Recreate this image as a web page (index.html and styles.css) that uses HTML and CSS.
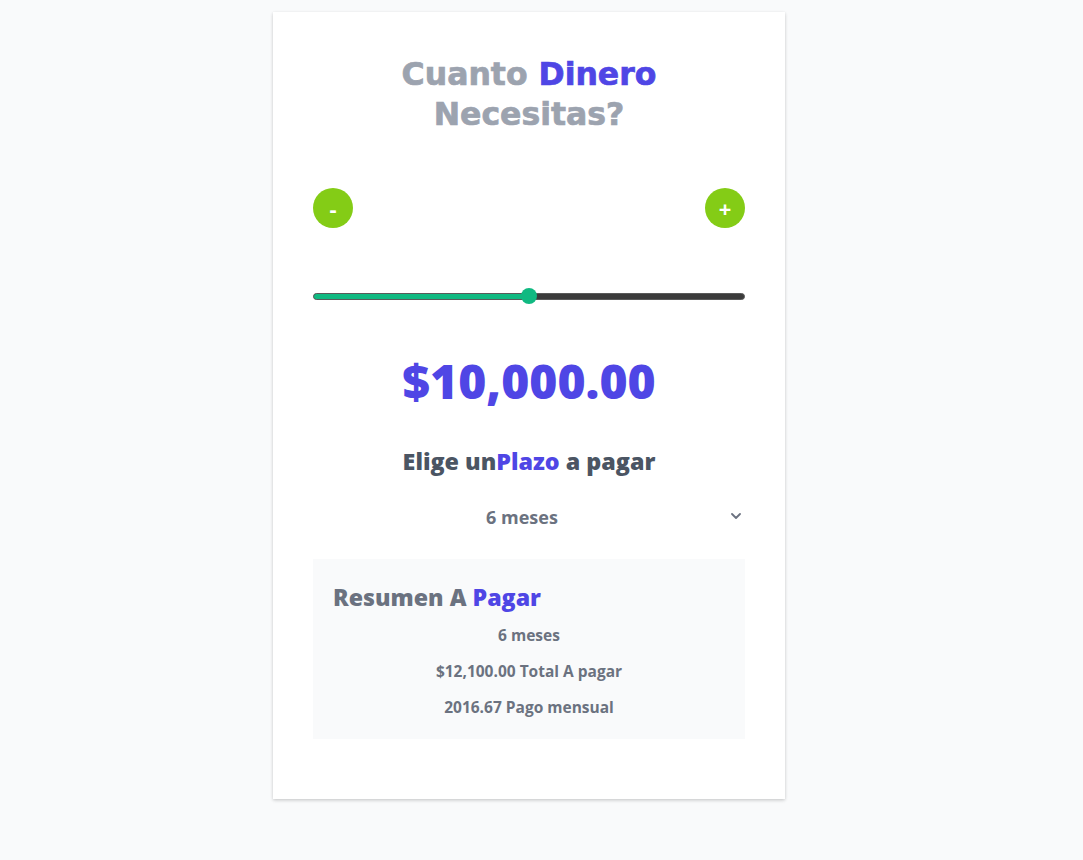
FILE: index.html
```html
<!DOCTYPE html>
<html lang="es">
<head>
<meta charset="utf-8">
<title>Cuanto Dinero Necesitas?</title>
<link rel="stylesheet" href="styles.css">
</head>
<body>
<main class="card">
  <h1 class="title">Cuanto <span class="accent">Dinero</span><br>Necesitas?</h1>

  <div class="buttons">
    <button class="round-btn" type="button">-</button>
    <button class="round-btn" type="button">+</button>
  </div>

  <div class="slider">
    <div class="track">
      <div class="fill" style="width: 50%"></div>
    </div>
    <div class="thumb" style="left: 50%"></div>
  </div>

  <p class="amount">$10,000.00</p>

  <h2 class="subtitle">Elige un<span class="accent">Plazo</span> a pagar</h2>

  <div class="select">
    <span class="select-text">6 meses</span>
    <svg class="chevron" width="10" height="6" viewBox="0 0 10 6" aria-hidden="true">
      <path d="M1 1 L5 5 L9 1" fill="none" stroke="#6b7280" stroke-width="1.8" stroke-linecap="round" stroke-linejoin="round"/>
    </svg>
  </div>

  <section class="summary">
    <h3 class="summary-title">Resumen A <span class="accent">Pagar</span></h3>
    <p class="summary-line">6 meses</p>
    <p class="summary-line">$12,100.00 Total A pagar</p>
    <p class="summary-line">2016.67 Pago mensual</p>
  </section>
</main>
</body>
</html>
```

FILE: styles.css
```css
* {
  box-sizing: border-box;
}

html {
  background: #f9fafb;
}

body {
  margin: 0;
  padding: 12px 25px 40px 0;
  background: #f9fafb;
  font-family: "Open Sans", "Noto Sans", sans-serif;
}

.card {
  width: 512px;
  margin: 0 auto;
  padding: 40px;
  background: #ffffff;
  box-shadow: 0 1px 3px rgba(0, 0, 0, 0.16), 0 2px 4px rgba(0, 0, 0, 0.06);
}

.accent {
  color: #4f46e5;
}

.title {
  margin: 0;
  padding-top: 2px;
  text-align: center;
  font-family: "DejaVu Sans", sans-serif;
  font-weight: bold;
  font-size: 31.5px;
  line-height: 40px;
  color: #9ca3af;
  -webkit-text-stroke: 0.7px currentColor;
}

.buttons {
  margin-top: 54px;
  display: flex;
  justify-content: space-between;
}

.round-btn {
  width: 40px;
  height: 40px;
  border: none;
  border-radius: 50%;
  background: #84cc16;
  color: #ffffff;
  font-family: "Open Sans", sans-serif;
  font-weight: 700;
  font-size: 22px;
  line-height: 40px;
  padding: 0;
  display: flex;
  align-items: center;
  justify-content: center;
}

.slider {
  position: relative;
  margin-top: 60px;
  height: 16px;
  display: flex;
  align-items: center;
}

.track {
  width: 100%;
  height: 7px;
  border-radius: 4px;
  background: #3b3b3b;
  border: 1px solid #5a5a5a;
  overflow: hidden;
}

.fill {
  height: 100%;
  background: #10b981;
}

.thumb {
  position: absolute;
  top: 0;
  width: 16px;
  height: 16px;
  margin-left: -8px;
  border-radius: 50%;
  background: #10b981;
}

.amount {
  margin: 53px 0 0;
  text-align: center;
  font-weight: 800;
  font-size: 48px;
  line-height: 48px;
  color: #4f46e5;
}

.subtitle {
  margin: 40px 0 0;
  text-align: center;
  font-weight: 800;
  font-size: 23.3px;
  line-height: 32px;
  color: #4b5563;
}

.select {
  position: relative;
  margin-top: 20px;
  height: 40px;
  padding-right: 14px;
  display: flex;
  align-items: center;
  justify-content: center;
}

.select-text {
  font-weight: 700;
  font-size: 18px;
  color: #6b7280;
}

.chevron {
  position: absolute;
  right: 4px;
  top: 16px;
}

.summary {
  margin: 22px 0 20px;
  padding: 22px 20px 22px;
  background: #f9fafb;
}

.summary-title {
  margin: 0;
  font-weight: 800;
  font-size: 23.2px;
  line-height: 32px;
  color: #6b7280;
}

.summary-line {
  margin: 16px 0 0;
  text-align: center;
  font-weight: 700;
  font-size: 15.5px;
  line-height: 20px;
  color: #6b7280;
}

.summary-title + .summary-line {
  margin-top: 12px;
}
```
